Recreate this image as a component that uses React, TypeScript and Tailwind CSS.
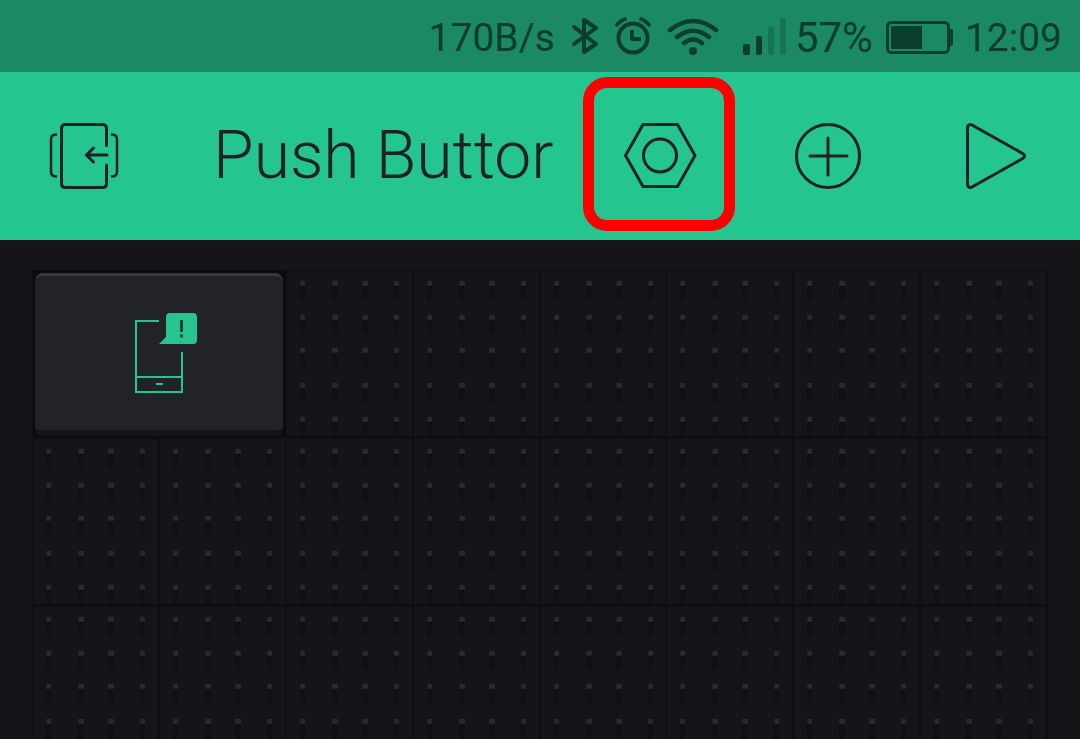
import React from "react";

const DOT_COLUMNS = [
  { x: 13, width: 5 },
  { x: 45, width: 6 },
  { x: 75, width: 6 },
  { x: 107, width: 5 },
];
const DOT_ROWS = [10, 44, 77, 112, 146];

function StatusBar() {
  return (
    <div className="flex h-[72px] items-center justify-end bg-[#1b8a64] pr-[18px] text-[39px] leading-[48px] text-[#0d3d2d]">
      <span className="pt-1">170B/s</span>
      <svg className="ml-4 h-10 w-7 shrink-0" viewBox="0 0 28 40" fill="none" stroke="currentColor" strokeWidth="4" strokeLinecap="round" strokeLinejoin="round" aria-label="Bluetooth">
        <path d="M3 11 25 28 13 36V4L25 12 3 28" />
      </svg>
      <svg className="ml-4 h-10 w-9 shrink-0" viewBox="0 0 36 40" fill="none" stroke="currentColor" strokeWidth="4" aria-label="Alarm">
        <circle cx="18" cy="22" r="14.5" />
        <path d="M17 14v9h9" strokeWidth="4" strokeLinejoin="round" />
        <path d="M1 10Q5 4.500 11.500 2.500M35 10Q31 4.500 24.500 2.500" strokeWidth="3.500" />
      </svg>
      <svg className="ml-4 h-10 w-[52px] shrink-0" viewBox="0 0 52 40" fill="none" stroke="currentColor" strokeWidth="4.500" strokeLinecap="round" aria-label="Wi-Fi">
        <path d="M3 14Q26-4 49 14M10 21Q26 8.500 42 21M17 27Q26 20 35 27" />
        <circle cx="26" cy="35" r="4" fill="currentColor" stroke="none" />
      </svg>
      <svg className="ml-6 h-10 w-11 shrink-0" viewBox="0 0 44 40" fill="currentColor" aria-label="Signal">
        <rect x="0" y="28" width="7" height="11" rx="2" />
        <rect x="13" y="20" width="6" height="19" rx="2" />
        <rect x="25" y="11" width="6" height="28" rx="2" fill="#177354" />
        <rect x="37" y="2" width="6" height="37" rx="2" fill="#177354" />
      </svg>
      <span className="ml-2 pt-1 text-[42px]">57%</span>
      <svg className="ml-3 h-10 w-[68px] shrink-0" viewBox="0 0 68 40" fill="none" stroke="currentColor" aria-label="Battery">
        <rect x="2.500" y="6.500" width="61" height="30" rx="4" strokeWidth="3" />
        <path d="M6 10h31v23H6zM65 13h1q2 0 2 2v13q0 2-2 2h-1z" fill="currentColor" stroke="none" />
      </svg>
      <span className="ml-3 pt-1">12:09</span>
    </div>
  );
}

function Toolbar() {
  return (
    <header className="flex h-[168px] items-center bg-[#25c590] text-[#1e2126]">
      <button type="button" aria-label="Back to projects" className="flex w-[168px] shrink-0 items-center justify-center">
        <svg className="h-[68px] w-[72px]" viewBox="0 0 72 68" fill="none" stroke="currentColor" strokeWidth="3">
          <path d="M58.500 23.500V6.500q0-4-4-4h-37q-4 0-4 4v55q0 4 4 4h37q4 0 4-4V43M38.500 33H59" strokeLinecap="round" />
          <path d="m45.500 26-7 7 7 7" strokeLinecap="round" strokeLinejoin="round" />
          <path d="M9 12.500H8q-5 0-5 5v32q0 5 5 5H9M63 12.500h1q5 0 5 5v32q0 5-5 5H63" strokeWidth="2.500" />
        </svg>
      </button>
      <h1 className="min-w-0 flex-1 overflow-hidden pl-[45px] text-[66px] leading-[80px] font-[350] whitespace-nowrap">Push Buttor</h1>
      <button type="button" aria-label="Project settings" className="mr-[9px] mb-1 flex h-[154px] w-[152px] shrink-0 items-center justify-center rounded-[24px] border-[11px] border-[#ff0000]">
        <svg className="h-[72px] w-[76px]" viewBox="0 0 76 72" fill="none" stroke="currentColor" strokeWidth="3">
          <path d="M22 6.500h34.500L74 37.500 56.500 68.500H22L4.500 37.500z" />
          <circle cx="39" cy="37.500" r="16.500" />
        </svg>
      </button>
      <button type="button" aria-label="Add widget" className="flex w-[168px] shrink-0 items-center justify-center">
        <svg className="h-[68px] w-[68px]" viewBox="0 0 68 68" fill="none" stroke="currentColor" strokeWidth="3" strokeLinecap="round">
          <circle cx="34" cy="34" r="31.500" />
          <path d="M34 16v37M16 34h37" />
        </svg>
      </button>
      <button type="button" aria-label="Run project" className="flex w-[168px] shrink-0 items-center justify-center">
        <svg className="h-[68px] w-16" viewBox="0 0 64 68" fill="none" stroke="currentColor" strokeWidth="3" strokeLinejoin="round">
          <path d="M3.500 5.500q.5-4 4.500-2.500l51.500 29q2 2 0 4L8 65q-4 1.500-4.500-2.500z" />
        </svg>
      </button>
    </header>
  );
}

function Cell() {
  return (
    <div className="h-[168px] border-r-2 border-b-[3px] border-[#0e0e12]">
      <svg className="h-full w-full" viewBox="0 0 125 165" preserveAspectRatio="none" aria-hidden="true">
        {DOT_ROWS.map((y) =>
          DOT_COLUMNS.map(({ x, width }) => (
            <g key={`${x}-${y}`}>
              <rect x={x} y={y + 5} width={width} height="14" fill="#111115" />
              <rect x={x} y={y} width={width} height="5" fill="#232326" />
              <rect x={x + 1} y={y} width={width - 1} height="4" fill="#2b2b2e" />
            </g>
          )),
        )}
      </svg>
    </div>
  );
}

function NotificationWidget() {
  return (
    <div className="col-span-2 h-[168px] border-r-2 border-b-[3px] border-[#0e0e12] bg-[#0b0b0e] px-[2px] pt-[2px]">
      <button type="button" aria-label="Notification" className="flex h-[163px] w-full items-center justify-center rounded-lg border-t-[3px] border-b-[6px] border-t-[#38383b] border-b-[#141517] bg-[#222328]">
        <svg className="h-20 w-[78px]" viewBox="0 0 78 80" fill="none" stroke="#25c590" strokeWidth="2">
          <path d="M39 8H16v71h46V39M16 64h46M36 71h7" />
          <path d="M50 0h23q4 0 4 4v23q0 4-4 4H39l7-7V4q0-4 4-4z" fill="#25c590" stroke="none" />
          <path d="M61.500 7v12M61.500 21.500v3" stroke="#222328" strokeWidth="2.500" />
        </svg>
      </button>
    </div>
  );
}

export default function App() {
  return (
    <div className="flex h-screen flex-col overflow-hidden bg-[#141419] font-['Roboto',sans-serif]">
      <StatusBar />
      <Toolbar />
      <main className="min-h-0 flex-1 overflow-hidden px-8 pt-[30px]">
        <div className="grid grid-cols-8 border-t border-l border-[#0e0e12]">
          <NotificationWidget />
          {Array.from({ length: 22 }, (_, i) => (
            <Cell key={i} />
          ))}
        </div>
      </main>
    </div>
  );
}
